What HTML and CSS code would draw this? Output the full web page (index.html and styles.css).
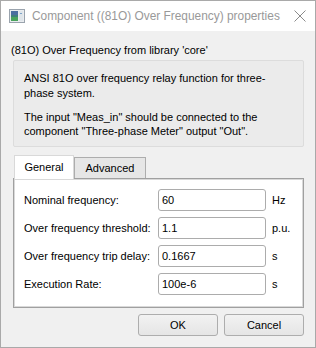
FILE: index.html
```html
<!DOCTYPE html>
<html>
<head>
<meta charset="utf-8">
<link rel="stylesheet" href="styles.css">
</head>
<body>
<div class="window">
  <div class="titlebar">
    <svg class="appicon" width="16" height="14" viewBox="0 0 16 14">
      <rect x="0.5" y="0.5" width="15" height="13" fill="#e9ecef" stroke="#9aa3ad"/>
      <rect x="2" y="2" width="7" height="10" fill="#3f7f7a"/>
      <rect x="2" y="2" width="7" height="4" fill="#4b6ea0"/>
      <rect x="2" y="8" width="7" height="4" fill="#4aa35c"/>
      <rect x="10" y="2" width="4" height="10" fill="#dfe5ea"/>
      <rect x="11" y="4" width="2" height="1" fill="#7da3c8"/>
    </svg>
    <span class="title">Component ((81O) Over Frequency) properties</span>
    <svg class="close" width="12" height="12" viewBox="0 0 12 12">
      <path d="M0.5 0.5 L11.5 11.5 M11.5 0.5 L0.5 11.5" stroke="#8a8a8a" stroke-width="1"/>
    </svg>
  </div>
  <div class="content">
    <div class="heading">(81O) Over Frequency from library 'core'</div>
    <div class="desc">
      <p>ANSI 81O over frequency relay function for three-<br>phase system.</p>
      <p>The input "Meas_in" should be connected to the<br>component "Three-phase Meter" output "Out".</p>
    </div>
    <div class="tabs">
      <div class="tabbar">
        <div class="tab active">General</div>
        <div class="tab">Advanced</div>
      </div>
      <div class="pane">
        <div class="row"><span class="label">Nominal frequency:</span><span class="field">60</span><span class="unit">Hz</span></div>
        <div class="row"><span class="label">Over frequency threshold:</span><span class="field">1.1</span><span class="unit">p.u.</span></div>
        <div class="row"><span class="label">Over frequency trip delay:</span><span class="field">0.1667</span><span class="unit">s</span></div>
        <div class="row"><span class="label">Execution Rate:</span><span class="field">100e-6</span><span class="unit">s</span></div>
      </div>
    </div>
    <div class="buttons">
      <div class="btn">OK</div>
      <div class="btn">Cancel</div>
    </div>
  </div>
</div>
</body>
</html>
```
FILE: styles.css
```css
html, body {
  margin: 0;
  padding: 0;
  background: #f0f0f0;
}
.window {
  box-sizing: border-box;
  width: 316px;
  height: 348px;
  border: 1px solid #a9a9a9;
  background: #f0f0f0;
  display: flex;
  flex-direction: column;
  font-family: "Liberation Sans", sans-serif;
  font-size: 11px;
  color: #000;
}
.titlebar {
  height: 30px;
  flex: none;
  background: #fff;
  display: flex;
  align-items: center;
  padding-left: 8px;
  padding-right: 9px;
}
.appicon {
  flex: none;
  margin-right: 7px;
}
.title {
  flex: 1;
  font-size: 11.9px;
  color: #999;
  white-space: nowrap;
}
.close {
  flex: none;
}
.content {
  flex: 1;
  display: flex;
  flex-direction: column;
  padding: 12px 11px 0 12px;
}
.heading {
  height: 17px;
  line-height: 14px;
  margin-left: -2px;
  flex: none;
}
.desc {
  flex: none;
  border: 1px solid #dcdcdc;
  background: #ebebeb;
  border-radius: 2px;
  padding: 10px 10px 0 10px;
  height: 87px;
  box-sizing: border-box;
  line-height: 14.5px;
}
.desc p {
  margin: 0 0 9.5px 0;
}
.tabs {
  margin-top: 8px;
  display: flex;
  flex-direction: column;
  flex: none;
}
.tabbar {
  display: flex;
  align-items: flex-end;
  height: 23px;
  padding-left: 1px;
  position: relative;
  z-index: 1;
}
.tab {
  box-sizing: border-box;
  height: 21px;
  width: 72px;
  border: 1px solid #adadad;
  border-bottom: none;
  background: #e6e6e6;
  line-height: 21px;
  text-align: center;
}
.tab.active {
  height: 24px;
  width: 60px;
  background: #fff;
  border-color: #d9d9d9;
  margin-bottom: -1px;
  line-height: 22px;
}
.pane {
  box-sizing: border-box;
  height: 130px;
  background: #fff;
  border: 1px solid #a0a0a0;
  box-shadow: inset 0 0 0 1px #d9d9d9;
  padding: 10px 0 0 10px;
  display: flex;
  flex-direction: column;
  gap: 6px;
}
.row {
  display: flex;
  align-items: center;
  height: 22px;
}
.label {
  width: 134px;
  flex: none;
  white-space: nowrap;
}
.field {
  box-sizing: border-box;
  width: 108px;
  height: 22px;
  border: 1px solid #acacac;
  border-radius: 3px;
  background: #fff;
  padding-left: 3px;
  line-height: 20px;
}
.unit {
  margin-left: 6px;
}
.buttons {
  display: flex;
  justify-content: flex-end;
  gap: 6px;
  margin-top: 6px;
}
.btn {
  box-sizing: border-box;
  width: 80px;
  height: 22px;
  border: 1px solid #adadad;
  border-radius: 3px;
  background: linear-gradient(#f2f2f2, #e5e5e5);
  text-align: center;
  line-height: 20px;
}
```
